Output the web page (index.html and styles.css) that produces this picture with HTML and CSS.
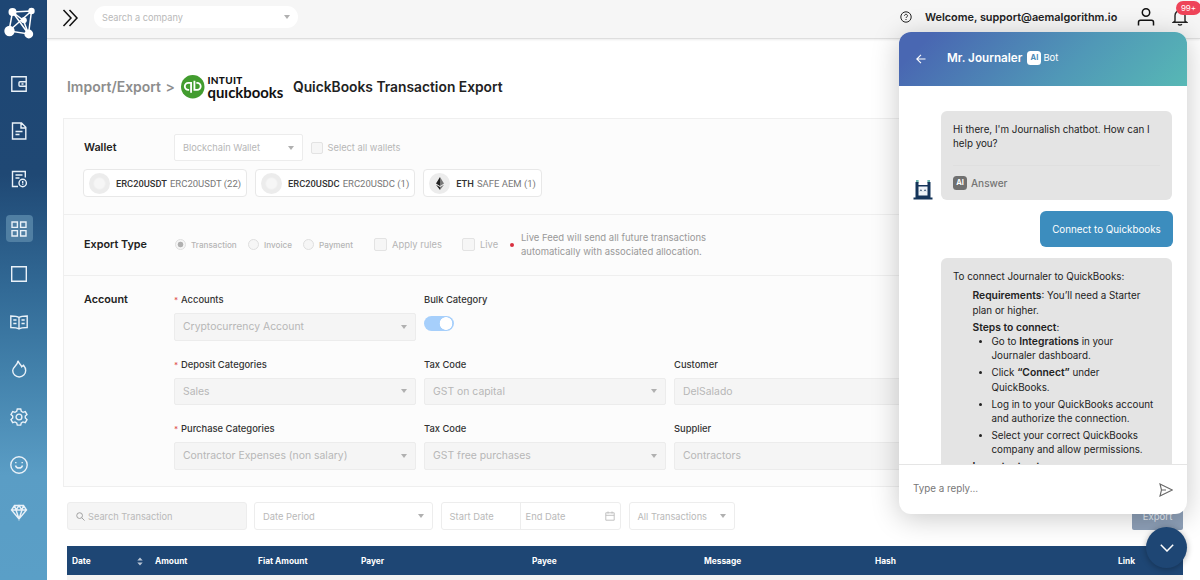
FILE: index.html
```html
<!DOCTYPE html>
<html lang="en">
<head>
    <meta charset="UTF-8">
    <meta name="viewport" content="width=device-width, initial-scale=1.0">
    <title>QuickBooks Transaction Export</title>
    <link rel="stylesheet" href="styles.css">
</head>
<body>

<div class="app">
    <!-- Sidebar -->
    <nav class="sidebar">
        <svg class="brand" viewBox="0 0 32 32" fill="none" stroke="#fff" stroke-width="1.5">
            <path d="M8.500 5L27.500 4L24.500 27L5 24zM8.500 5L24.500 27M27.500 4L5 24M8.500 5L19.500 13.500L24.500 27"/>
            <g fill="#fff" stroke="none"><circle cx="8.500" cy="5" r="4"/><circle cx="27.500" cy="4" r="3.200"/><circle cx="5.500" cy="24" r="5.200"/><circle cx="24.800" cy="27" r="4.400"/><circle cx="19.800" cy="13.200" r="3"/></g>
        </svg>
        <div class="nav-list">
            <a class="nav-item"><svg viewBox="0 0 18 18"><path d="M1.800 1.800h14.400v14.400H1.800zM16 6.700H10a1 1 0 0 0-1 1v2.600a1 1 0 0 0 1 1h6M11.500 9h2"/></svg></a>
            <a class="nav-item"><svg viewBox="0 0 18 18"><path d="M2.500 1h9l4.300 4.300V17H2.500zM11 1v5h4.800M5.500 9.500h7M5.500 12.500h4"/></svg></a>
            <a class="nav-item"><svg viewBox="0 0 18 18"><path d="M8 16.500H2.500v-15h12.800v6M5.500 5h7M5.500 8h4"/><circle cx="12.700" cy="13" r="3.700"/><path d="M12.700 11v2.500M12.700 14.300v.7"/></svg></a>
            <a class="nav-item active"><span><svg viewBox="0 0 18 18"><path d="M2 2h5.400v5.400H2zM10.600 2H16v5.400h-5.400zM2 10.600h5.400V16H2zM10.600 10.600H16V16h-5.400z"/></svg></span></a>
            <a class="nav-item"><svg viewBox="0 0 18 18"><path d="M1.700 1.700h14.600v14.600H1.700z"/></svg></a>
            <a class="nav-item"><svg viewBox="0 0 18 18"><path d="M9 4.500C7 3 4 3 .8 3v11.500c3 0 6 0 8.200 1.500 2.200-1.500 5.200-1.500 8.200-1.500V3C14 3 11 3 9 4.500zM9 4.500V16M3.300 7h3.200M3.300 10.500h3.200M11.500 7h3.200M11.500 10.500h3.200"/></svg></a>
            <a class="nav-item"><svg viewBox="0 0 18 18"><path d="M8 .8c.7 2.600 3.200 4 3.700 6l1.800-1.600c1.400 1.600 2.200 3.500 2.200 5.300a6.500 6.500 0 0 1-13 0C2.700 6.800 7.800 5.500 8 .8z"/></svg></a>
            <a class="nav-item"><svg viewBox="0 0 18 18"><path d="M7.300 1h3.400l.6 2.300 1.700 1 2.300-.7 1.700 3L15.300 8v2l1.700 1.600-1.700 3-2.300-.7-1.700 1-.6 2.200H7.300l-.6-2.200-1.700-1-2.300.7-1.700-3L2.700 10V8L1 6.500l1.700-3 2.300.8 1.700-1z"/><circle cx="9" cy="9" r="2.900"/></svg></a>
            <a class="nav-item"><svg viewBox="0 0 18 18"><circle cx="9" cy="9" r="8.200"/><path d="M5.500 9.500c.7 3.400 6.300 3.400 7 0M5.800 6v1.200M12.200 6v1.200"/></svg></a>
            <a class="nav-item"><svg viewBox="0 0 18 18"><path d="M4.500 2.500h9l3 4.500L9 16 1.500 7zM1.500 7h15M6 7l3 9 3-9-3-4.500zM4.500 2.500L6 7M13.500 2.500L12 7"/></svg></a>
        </div>
    </nav>

    <div class="content">
        <header class="topbar">
            <svg class="toggle" viewBox="0 0 18 18" fill="none" stroke="#111" stroke-width="1.500"><path d="M1.500 1L9 9l-7.500 8M7.500 1L15 9l-7.500 8"/></svg>
            <div class="company-search">Search a company<i class="caret"></i></div>
            <svg class="help" viewBox="0 0 12 12" fill="none" stroke="#222" stroke-width="1"><circle cx="6" cy="6" r="5.200"/><path d="M4.500 4.800c0-2 3-2 3 0C7.500 6 6 5.900 6 7M6 8v1"/></svg>
            <span class="welcome">Welcome, support@aemalgorithm.io</span>
            <svg class="user" viewBox="0 0 18 18" fill="none" stroke="#111" stroke-width="1.500"><circle cx="9" cy="4.500" r="3.700"/><path d="M1.500 17.500v-3.200q0-2 2-2h11q2 0 2 2v3.200"/></svg>
            <span class="bell">
                <svg viewBox="0 0 16 18" fill="none" stroke="#222" stroke-width="1.400"><path d="M3 13V7.500a5 5 0 0 1 10 0V13l1.500 1.200h-13zM6 16.200q2 1.500 4 0"/></svg>
                <b class="badge">99+</b>
            </span>
        </header>

        <main class="page">
            <h1 class="page-title">
                <span class="crumb">Import/Export &gt;</span>
                <svg class="qb-logo" viewBox="0 0 24 24" fill="none" stroke="#fff" stroke-width="1.900"><circle cx="12" cy="12" r="12" fill="#429c2f" stroke="none"/><path d="M10.300 18V8H7.500a3.400 3.400 0 0 0 0 7.200h.8M13.700 5.800v9.400h2.800a3.500 3.500 0 0 0 0-7.200h-.8"/></svg>
                <span class="qb-name"><span>INTUIT</span>quıckbooks</span>
                <span>QuickBooks Transaction Export</span>
            </h1>

            <div class="panel">
                <section class="row wallet">
                    <div class="wallet-line">
                        <h2>Wallet</h2>
                        <div class="select white">Blockchain Wallet<i class="caret"></i></div>
                        <i class="check"></i><span>Select all wallets</span>
                    </div>
                    <div class="chips">
                        <div class="chip"><i class="coin"></i><b>ERC20USDT</b><span>ERC20USDT (22)</span></div>
                        <div class="chip"><i class="coin"></i><b>ERC20USDC</b><span>ERC20USDC (1)</span></div>
                        <div class="chip"><i class="coin eth"><svg viewBox="0 0 8 13"><path fill="#777" d="M4 0l4 6.500-4 2.400zM4 10l4-2.300L4 13z"/><path fill="#222" d="M4 0L0 6.500l4 2.400zM4 10L0 7.700 4 13z"/></svg></i><b>ETH</b><span>SAFE AEM (1)</span></div>
                    </div>
                </section>
                <section class="row export">
                    <h2>Export Type</h2>
                    <i class="radio on"></i><span class="r1">Transaction</span>
                    <i class="radio"></i><span class="r2">Invoice</span>
                    <i class="radio"></i><span class="r3">Payment</span>
                    <i class="check"></i><span class="c1">Apply rules</span>
                    <i class="check"></i><span class="c2">Live</span>
                    <i class="dot"></i>
                    <p>Live Feed will send all future transactions<br>automatically with associated allocation.</p>
                </section>
                <section class="row account">
                    <h2>Account</h2>
                    <div class="fields">
                        <div class="field"><label><em>*</em>Accounts</label><div class="select">Cryptocurrency Account<i class="caret"></i></div></div>
                        <div class="field"><label>Bulk Category</label><div class="switch"></div></div>
                        <div></div>
                        <div class="field"><label><em>*</em>Deposit Categories</label><div class="select">Sales<i class="caret"></i></div></div>
                        <div class="field"><label>Tax Code</label><div class="select">GST on capital<i class="caret"></i></div></div>
                        <div class="field"><label>Customer</label><div class="select">DelSalado<i class="caret"></i></div></div>
                        <div class="field"><label><em>*</em>Purchase Categories</label><div class="select">Contractor Expenses (non salary)<i class="caret"></i></div></div>
                        <div class="field"><label>Tax Code</label><div class="select">GST free purchases<i class="caret"></i></div></div>
                        <div class="field"><label>Supplier</label><div class="select">Contractors<i class="caret"></i></div></div>
                    </div>
                </section>
            </div>

            <div class="filters">
                <div class="box search"><svg viewBox="0 0 10 10" fill="none" stroke="#999" stroke-width="1"><circle cx="4" cy="4" r="3.200"/><path d="M6.300 6.300L9.500 9.500"/></svg>Search Transaction</div>
                <div class="box period">Date Period<i class="caret"></i></div>
                <div class="box range"><span>Start Date</span><span>End Date</span><svg viewBox="0 0 10 10" fill="none" stroke="#bbb" stroke-width=".9"><path d="M.8 1.800h8.400v7.400H.8zM.8 4.300h8.400M3 .5v2M7 .5v2"/></svg></div>
                <div class="box all">All Transactions<i class="caret"></i></div>
                <button class="export-btn">Export</button>
            </div>

            <div class="table-head">
                <span>Date<svg class="sorter" viewBox="0 0 6 10"><path fill="#b9c6d6" d="M3 0.500l3 3.500H0zM3 9.500l3-3.500H0z"/></svg></span>
                <span>Amount</span><span>Fiat Amount</span><span>Payer</span><span>Payee</span><span>Message</span><span>Hash</span><span>Link</span>
            </div>
            <div class="table-body"></div>
        </main>
    </div>
</div>

<!-- Chat widget -->
<div class="chat">
    <div class="chat-head">
        <svg viewBox="0 0 10 10" fill="none" stroke="#fff" stroke-width="1.100"><path d="M9.500 5H1M5 .8L.8 5 5 9.200"/></svg>
        <strong>Mr. Journaler</strong><i class="ai">AI</i><span>Bot</span>
    </div>
    <div class="chat-body">
        <div class="message">
            <svg class="avatar" viewBox="0 0 20 20"><path fill="#6fb5ae" d="M3 0h2.600v3H3zM14.400 0H17v3h-2.600z"/><path fill="#14355a" d="M2.500 2h3v3h9V2h3v15.500h2v2H.5v-2h2z"/><path fill="#eef4f8" d="M5.500 6.500h9v9h-9z"/><path stroke="#14355a" stroke-width=".7" fill="none" d="M7 11.200l.9-1.500.9 1.500M11.200 11.200l.9-1.500.9 1.500"/></svg>
            <div class="bubble hello">
                <p>Hi there, I'm Journalish chatbot. How can I help you?</p>
                <div class="answer"><i class="ai">AI</i>Answer</div>
            </div>
        </div>
        <div class="reply">Connect to Quickbooks</div>
        <div class="bubble steps">
            <p>To connect Journaler to QuickBooks:</p>
            <div class="step-list">
                <p><b>Requirements</b>: You’ll need a Starter plan or higher.</p>
                <p><b>Steps to connect</b>:</p>
                <ul>
                    <li>Go to <b>Integrations</b> in your<br>Journaler dashboard.</li>
                    <li>Click <b>“Connect”</b> under<br>QuickBooks.</li>
                    <li>Log in to your QuickBooks account and authorize the connection.</li>
                    <li>Select your correct QuickBooks company and allow permissions.</li>
                </ul>
                <p><b>Important notes</b>:</p>
            </div>
        </div>
    </div>
    <div class="chat-input">Type a reply...
        <svg viewBox="0 0 14 14" fill="none" stroke="#666" stroke-width="1.100"><path d="M1 1l12.300 6L1 13l1.500-6zM2.500 7H7"/></svg>
    </div>
</div>
<button class="chat-toggle"><svg viewBox="0 0 14 8" fill="none" stroke="#fff" stroke-width="1.500"><path d="M.8.800L7 7 13.200.8"/></svg></button>

</body>
</html>
```

FILE: styles.css
```css
* {
    box-sizing: border-box;
}

body {
    margin: 0;
    height: 580px;
    overflow: hidden;
    background: #fff;
    font-family: Inter, "Liberation Sans", sans-serif;
    font-size: 9.4px;
    color: #222;
}

h1, h2, p, ul {
    margin: 0;
}

.app {
    display: flex;
    height: 580px;
}

.sidebar {
    width: 47px;
    flex: none;
    background: linear-gradient(#1e4674 0%, #1f4874 30%, #326a96 50%, #4281ab 64%, #5a9dc5 82%, #5a9fc7 100%);
}

.brand {
    display: block;
    width: 32px;
    height: 32px;
    margin: 7px 0 0 4px;
}

.nav-list {
    margin-top: 21px;
    width: 38px;
}

.nav-item {
    display: flex;
    height: 47.6px;
    align-items: center;
    justify-content: center;
}

.nav-item svg {
    display: block;
    width: 18px;
    height: 18px;
    fill: none;
    stroke: #e9f1f8;
    stroke-width: 1.4;
}

.nav-item.active {
    padding-top: 4px;
}

.nav-item.active span {
    padding: 4.5px;
    border-radius: 4px;
    background: #507fa3;
}

.content {
    flex: 1;
    min-width: 0;
    display: flex;
    flex-direction: column;
}

/* top bar */
.topbar {
    display: flex;
    align-items: center;
    height: 39px;
    flex: none;
    padding: 0 12px 4px 15px;
    background: #f6f6f6;
    border-bottom: 1px solid #dedede;
    box-shadow: 0 1px 2px rgba(0, 0, 0, .08);
}

.toggle {
    width: 18px;
    height: 18px;
    margin-top: 1px;
}

.company-search {
    display: flex;
    align-items: center;
    justify-content: space-between;
    width: 204px;
    height: 22px;
    margin-left: 14px;
    padding: 0 8px;
    border-radius: 11px;
    background: #fff;
    color: #b9b9b9;
    font-size: 9.2px;
}

.caret {
    border: 3.3px solid transparent;
    border-top: 4.5px solid #b0b0b0;
    border-bottom: 0;
}

.help {
    width: 12px;
    height: 12px;
    margin-left: auto;
}

.welcome {
    margin-left: 13px;
    width: 193px;
    white-space: nowrap;
    font-size: 10.87px;
    font-weight: 600;
}

.user {
    width: 18px;
    height: 18px;
    margin-left: 19px;
}

.bell {
    position: relative;
    margin-left: 17px;
    width: 16px;
    height: 18px;
}

.bell svg {
    width: 16px;
    height: 18px;
}

.badge {
    position: absolute;
    left: 4px;
    top: -7px;
    width: 25px;
    height: 14px;
    border-radius: 7px;
    background: #ee4459;
    color: #fff;
    font-size: 8px;
    font-weight: 400;
    line-height: 14px;
    text-align: center;
}

/* page */
.page {
    flex: 1;
    padding: 27px 17px 0 16px;
}

.page-title {
    display: flex;
    align-items: center;
    height: 42px;
    padding-left: 4px;
    font-size: 13.8px;
    font-weight: 600;
    white-space: nowrap;
}

.crumb {
    width: 114px;
    color: #8d8d8d;
    font-size: 13.97px;
    word-spacing: 1px;
    line-height: 16px;
    padding-bottom: 1px;
}

.qb-logo {
    width: 23.5px;
    height: 23.5px;
}

.qb-name {
    display: flex;
    flex-direction: column;
    width: 88.5px;
    padding: 0 0 1px 3px;
    color: #111;
    font-family: Lato, sans-serif;
    font-size: 14.9px;
    font-weight: 700;
    line-height: 13px;
}

.qb-name span {
    font-size: 10px;
    font-weight: 900;
    line-height: 11px;
    letter-spacing: .3px;
}

.panel {
    height: 369px;
    margin-top: 10px;
    border: 1px solid #efefef;
    background: #fcfcfc;
}

.row + .row {
    border-top: 1px solid #efefef;
}

h2 {
    font-size: 10.8px;
    font-weight: 600;
}

.select {
    display: flex;
    align-items: center;
    justify-content: space-between;
    height: 28px;
    padding: 0 8px;
    border: 1px solid #ececec;
    border-radius: 2px;
    background: #f5f5f5;
    color: #b7b7b7;
    font-size: 10.4px;
    white-space: nowrap;
}

.select.white {
    width: 129px;
    height: 27px;
    background: #fff;
    font-size: 9.25px;
}

.check {
    width: 12px;
    height: 12px;
    border: 1px solid #e3e3e3;
    border-radius: 2px;
    background: #f6f6f6;
}

.wallet {
    height: 95px;
    padding: 15px 0 0 20px;
}

.wallet-line {
    display: flex;
    align-items: center;
    color: #b7b7b7;
    font-size: 9.3px;
}

.wallet-line h2 {
    width: 90px;
    color: #222;
}

.wallet-line .check {
    margin: 0 5px 0 7.5px;
}

.chips {
    display: flex;
    gap: 8px;
    margin: 8px 0 0 -1px;
}

.chip {
    display: flex;
    align-items: center;
    height: 28px;
    padding: 0 5px 0 5px;
    border: 1px solid #e8e8e8;
    border-radius: 4px;
    background: #fff;
    color: #777;
    font-family: Roboto, sans-serif;
    font-size: 9.5px;
    white-space: nowrap;
}

.chip b {
    margin-right: 3px;
    color: #333;
    font-weight: 500;
    font-size: 9.3px;
}

.coin {
    width: 21px;
    height: 21px;
    margin-right: 6px;
    border-radius: 50%;
    background: radial-gradient(circle, #f6f6f6 0 32%, #ececec 44%);
}

.coin.eth {
    display: flex;
    align-items: center;
    justify-content: center;
    background: #ececec;
}

.eth svg {
    width: 8px;
    height: 13px;
}

.export {
    display: flex;
    align-items: center;
    height: 61px;
    padding: 0 0 1px 20px;
    color: #b5b5b5;
    font-size: 8.15px;
    font-weight: 500;
}

.export h2 {
    width: 91px;
    color: #222;
}

.radio {
    width: 11px;
    height: 11px;
    margin-right: 5px;
    border: 1px solid #dfdfdf;
    border-radius: 50%;
    background: #f6f6f6;
}

.radio.on {
    background: radial-gradient(circle, #b0b0b0 0 2.500px, #f6f6f6 3.200px);
}

.r1 {
    width: 57px;
}

.r2 {
    width: 39px;
}

.r3 {
    width: 55px;
}

.export .check {
    width: 13px;
    height: 13px;
    margin-right: 5px;
}

.c1, .c2 {
    width: 70px;
    font-size: 9.4px;
    font-weight: 400;
}

.c2 {
    width: 30px;
}

.dot {
    width: 4px;
    height: 4px;
    border-radius: 50%;
    background: #d8303f;
}

.export p {
    margin-left: 7px;
    padding-top: 1px;
    color: #999;
    font-size: 9.5px;
    font-weight: 400;
    line-height: 14.4px;
}

.account {
    display: flex;
    padding: 17px 0 0 20px;
}

.account h2 {
    width: 90px;
}

.fields {
    display: grid;
    grid-template-columns: 242px 242px 242px;
    grid-auto-rows: 64.6px;
    column-gap: 8px;
}

.field label {
    display: block;
    height: 20px;
    color: #333;
    font-size: 9.4px;
    font-weight: 500;
    line-height: 14.5px;
}

.field em {
    display: inline-block;
    width: 7px;
    color: #e0524f;
    font-size: 8px;
    font-style: normal;
}

.field .select {
    height: 27.5px;
}

.switch {
    width: 30px;
    height: 15px;
    margin-top: 2.5px;
    border-radius: 8px;
    background: radial-gradient(circle at 22px 50%, #fff 6px, #a6cffb 6.600px);
}

/* filters */
.filters {
    display: flex;
    gap: 7.5px;
    margin: 15px 0 0 4px;
}

.box {
    display: flex;
    align-items: center;
    justify-content: space-between;
    height: 28px;
    padding: 0 8px;
    border: 1px solid #ededed;
    border-radius: 3px;
    color: #b9b9b9;
    font-size: 9.4px;
}

.search {
    width: 179.5px;
    justify-content: flex-start;
    gap: 3px;
    background: #f5f5f5;
    font-size: 9.25px;
}

.box svg {
    width: 9px;
    height: 9px;
}

.period {
    width: 179px;
}

.range {
    width: 180.5px;
    padding: 0 5px 0 8px;
}

.range span + span {
    height: 26px;
    margin-left: 19px;
    padding-left: 5px;
    border-left: 1px solid #ededed;
    line-height: 27px;
}

.range svg {
    width: 10px;
    height: 10px;
    margin-left: auto;
}

.range span:first-child {
    width: 51px;
}

.all {
    width: 106px;
    font-size: 9.24px;
}

.export-btn {
    width: 51px;
    height: 28px;
    margin-left: auto;
    padding: 0;
    border: 0;
    border-radius: 2px;
    background: #8ea0b8;
    color: #e8edf3;
    font: 9.6px Inter, sans-serif;
}

.table-head {
    display: grid;
    grid-template-columns: 83px 103px 103px 171px 172px 171px 243px 1fr;
    height: 29px;
    margin: 16px 0 0 4px;
    padding-left: 5px;
    background: #1e4674;
    color: #fff;
    font-size: 8.35px;
    font-weight: 700;
    line-height: 30px;
    white-space: nowrap;
}

.table-head span:first-child {
    display: flex;
    align-items: center;
    justify-content: space-between;
    padding-right: 12px;
}

.sorter {
    width: 6px;
    height: 9px;
}

.table-body {
    height: 10px;
    margin-left: 4px;
    background: #f4f2f1;
}

/* chat */
.chat {
    position: absolute;
    left: 899px;
    top: 32px;
    display: flex;
    flex-direction: column;
    width: 288px;
    height: 482px;
    border-radius: 12px;
    overflow: hidden;
    background: #fff;
    box-shadow: 0 4px 28px rgba(0, 0, 0, .22);
    font-size: 9.8px;
    line-height: 14.4px;
}

.chat-head {
    display: flex;
    align-items: center;
    height: 54px;
    flex: none;
    padding: 0 0 3px 17px;
    background: linear-gradient(135deg, #4967b2 10%, #5098b7 60%, #57b8b5);
    color: #fff;
    font-size: 9.5px;
}

.chat-head svg {
    width: 10px;
    height: 10px;
    margin: 3px 21px 0 0;
}

.chat-head strong {
    font-size: 11.7px;
    font-weight: 600;
    padding-top: 1px;
}

.ai {
    width: 14px;
    height: 14px;
    margin: 0 2px 0 5px;
    border-radius: 3.5px;
    background: #fff;
    color: #4b8cb8;
    font-size: 7.5px;
    font-style: normal;
    font-weight: 700;
    line-height: 14px;
    text-align: center;
}

.chat-head span {
    padding-top: 1px;
}

.chat-body {
    display: flex;
    flex: 1;
    min-height: 0;
    flex-direction: column;
    overflow: hidden;
    padding: 25px 14px 0;
}

.message {
    display: flex;
    flex: none;
    align-items: flex-end;
    gap: 8px;
}

.avatar {
    width: 20px;
    height: 20px;
}

.bubble {
    width: 231px;
    padding: 12px 12px;
    border-radius: 6px;
    background: #e4e4e4;
}

.hello {
    height: 89px;
}

.answer {
    display: flex;
    align-items: center;
    height: 35px;
    margin-top: 13px;
    border-top: 1px solid #dfdfdf;
    color: #757575;
    font-size: 10.04px;
    font-weight: 500;
}

.answer .ai {
    margin: 0 4px 0 0;
    background: #707070;
    color: #fff;
}

.reply {
    align-self: flex-end;
    flex: none;
    height: 36px;
    margin: 11px 0;
    padding: 1px 12.3px 0;
    border-radius: 6px;
    background: #3c8dbe;
    color: #fff;
    line-height: 36px;
}

.steps {
    align-self: flex-end;
    flex: none;
    margin-right: 1px;
}

.step-list {
    padding: 5px 0 0 19.5px;
}

.step-list p {
    margin-bottom: 2.4px;
}

.steps b {
    font-weight: 600;
    font-size: 10.3px;
    line-height: 12px;
}

.step-list ul {
    margin-top: -2.4px;
    padding-left: 19px;
}

.step-list li {
    width: 168px;
    margin-bottom: 2.5px;
}

.chat-input {
    display: flex;
    align-items: center;
    justify-content: space-between;
    height: 50px;
    flex: none;
    padding: 0 14px;
    border-top: 1px solid #e5e5e5;
    color: #777;
}

.chat-input svg {
    width: 14px;
    height: 14px;
}

.chat-toggle {
    position: absolute;
    left: 1146px;
    top: 527px;
    width: 41px;
    height: 41px;
    padding: 0;
    border: 0;
    border-radius: 50%;
    background: #1e4674;
    box-shadow: 0 1px 6px rgba(0, 0, 0, .3);
}

.chat-toggle svg {
    width: 14px;
    height: 8px;
}
```
